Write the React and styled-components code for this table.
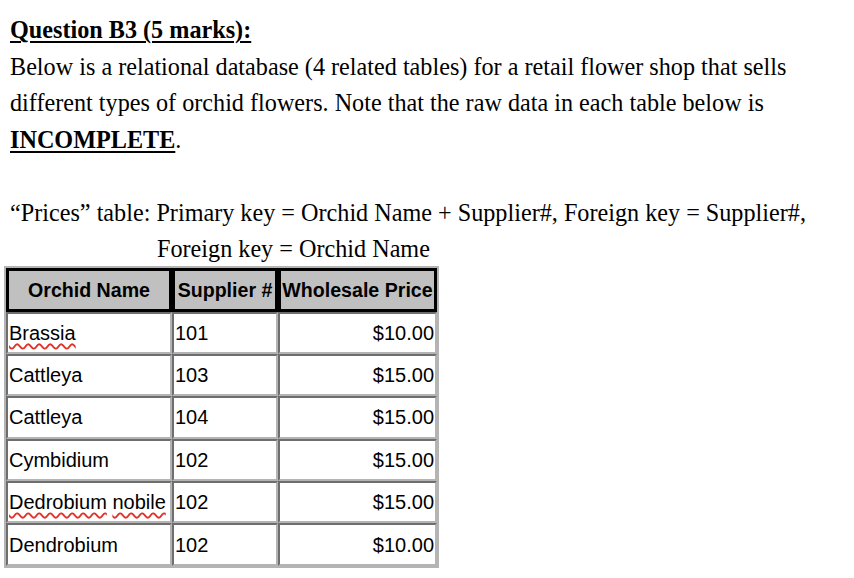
import React from 'react';
import styled, { createGlobalStyle } from 'styled-components';

const GlobalStyle = createGlobalStyle`
  html, body {
    margin: 0;
    padding: 0;
    background: #ffffff;
  }
`;

const Page = styled.div`
  padding: 12px 10px 0 10px;
  font-family: "Liberation Serif", "Times New Roman", serif;
  font-size: 24.2px;
  line-height: 36.5px;
  color: #000;
`;

const Line = styled.p`
  margin: 0;
  padding-left: ${(p) => p.indent || 0}px;
  min-height: 36.5px;
  white-space: nowrap;
`;

const Title = styled.span`
  font-weight: bold;
  text-decoration: underline;
  text-decoration-thickness: 2px;
  text-underline-offset: 3px;
`;

const Strong = styled.span`
  font-weight: bold;
  text-decoration: underline;
  text-decoration-thickness: 2px;
  text-underline-offset: 3px;
`;

const Table = styled.table`
  margin-left: -6px;
  margin-top: -2px;
  border-collapse: separate;
  border-spacing: 0;
  border: 2px solid #b4b4b4;
  font-family: "Liberation Sans", Arial, sans-serif;
  font-size: 20px;
  line-height: 24px;
`;

const HeadCell = styled.th`
  background: #c0c0c0;
  border: 3px solid #000;
  font-weight: bold;
  font-size: 19.6px;
  height: 44px;
  padding: 0;
  text-align: center;
  white-space: nowrap;
  width: ${(p) => p.w}px;
  box-sizing: border-box;
`;

const Cell = styled.td`
  border-top: 2px solid #6e6e6e;
  border-left: 2px solid #6e6e6e;
  border-right: 2px solid #b4b4b4;
  border-bottom: 2px solid #b4b4b4;
  height: 42.4px;
  padding: 0 1px;
  text-align: ${(p) => (p.right ? 'right' : 'left')};
  white-space: nowrap;
  box-sizing: border-box;
`;

const Misspelled = styled.span`
  text-decoration: underline wavy #e0332a;
  text-decoration-thickness: 1.5px;
  text-underline-offset: 3px;
`;

const rows = [
  { name: 'Brassia', bad: true, supplier: '101', price: '$10.00' },
  { name: 'Cattleya', supplier: '103', price: '$15.00' },
  { name: 'Cattleya', supplier: '104', price: '$15.00' },
  { name: 'Cymbidium', supplier: '102', price: '$15.00' },
  { name: 'Dedrobium nobile', bad: true, supplier: '102', price: '$15.00' },
  { name: 'Dendrobium', supplier: '102', price: '$10.00' },
];

const renderName = (row) => {
  if (!row.bad) return row.name;
  return row.name.split(' ').map((word, i) => (
    <React.Fragment key={i}>
      {i > 0 && ' '}
      <Misspelled>{word}</Misspelled>
    </React.Fragment>
  ));
};

export default function App() {
  return (
    <Page>
      <GlobalStyle />
      <Line>
        <Title>Question B3 (5 marks):</Title>
      </Line>
      <Line>
        Below is a relational database (4 related tables) for a retail flower shop that sells
      </Line>
      <Line>
        different types of orchid flowers. Note that the raw data in each table below is
      </Line>
      <Line>
        <Strong>INCOMPLETE</Strong>.
      </Line>
      <Line />
      <Line>
        “Prices” table: Primary key = Orchid Name + Supplier#, Foreign key = Supplier#,
      </Line>
      <Line indent={147}>Foreign key = Orchid Name</Line>
      <Table>
        <thead>
          <tr>
            <HeadCell w={166}>Orchid Name</HeadCell>
            <HeadCell w={106}>Supplier #</HeadCell>
            <HeadCell w={159}>Wholesale Price</HeadCell>
          </tr>
        </thead>
        <tbody>
          {rows.map((row, i) => (
            <tr key={i}>
              <Cell>{renderName(row)}</Cell>
              <Cell>{row.supplier}</Cell>
              <Cell right>{row.price}</Cell>
            </tr>
          ))}
        </tbody>
      </Table>
    </Page>
  );
}
